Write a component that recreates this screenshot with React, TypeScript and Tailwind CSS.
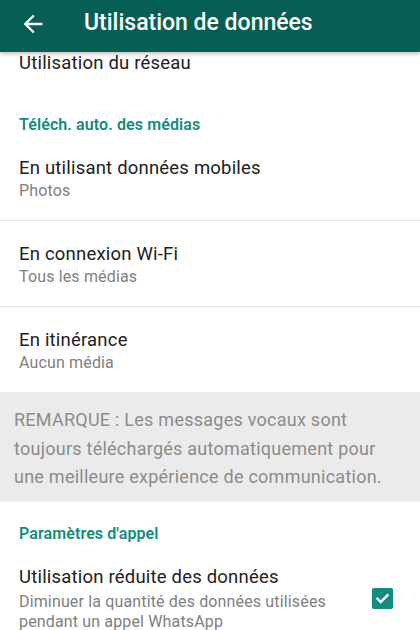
import type { ReactNode } from 'react';

function Row({ title, sub, children }: { title: string; sub: ReactNode; children?: ReactNode }) {
  return (
    <div className="flex items-center pl-[19px] pr-[27px] pt-[22px] pb-[19px]">
      <div className="flex-1">
        <div className="text-[18.5px] leading-[22px] tracking-[0.2px] text-[#212121]">{title}</div>
        <div className="mt-[2px] text-[16px] leading-[20px] tracking-[0.15px] text-[#808080]">{sub}</div>
      </div>
      {children}
    </div>
  );
}

function Section({ label }: { label: string }) {
  return (
    <div className="pl-[19px] text-[16px] leading-[20px] font-semibold tracking-[0.1px] text-[#128c7e]">{label}</div>
  );
}

export default function App() {
  return (
    <div className="w-[420px] h-[630px] overflow-hidden bg-white" style={{ fontFamily: 'Roboto, "Noto Sans", sans-serif' }}>
      <header className="relative z-10 h-[52px] bg-[#075e54] flex items-center shadow-[0_2px_4px_rgba(0,0,0,0.25)]">
        <svg viewBox="0 0 24 24" className="ml-[19px] -mt-[4px] w-[28px] h-[28px] fill-white">
          <path d="M20 11H7.83l5.59-5.59L12 4l-8 8 8 8 1.41-1.41L7.83 13H20v-2z" />
        </svg>
        <h1 className="ml-[37px] -mt-[6px] text-[23px] font-medium text-white">Utilisation de données</h1>
      </header>

      <div className="h-[48px] pl-[19px] text-[18.5px] leading-[22px] tracking-[0.2px] text-[#212121]">Utilisation du réseau</div>

      <div className="pt-[15px]">
        <Section label="Téléch. auto. des médias" />
      </div>

      <Row title="En utilisant données mobiles" sub="Photos" />
      <div className="h-px bg-[#e2e2e2]" />
      <Row title="En connexion Wi-Fi" sub="Tous les médias" />
      <div className="h-px bg-[#e2e2e2]" />
      <Row title="En itinérance" sub="Aucun média" />

      <div className="bg-[#ebebeb] px-[14px] pt-[14px] pb-[10px] text-[18px] leading-[28.5px] tracking-[0.25px] text-[#8c8c8c]">
        REMARQUE : Les messages vocaux sont
        <br />
        toujours téléchargés automatiquement pour
        <br />
        une meilleure expérience de communication.
      </div>

      <div className="pt-[22px]">
        <Section label="Paramètres d'appel" />
      </div>

      <div className="flex items-center pl-[19px] pr-[27px] pt-[22px]">
        <div className="flex-1">
          <div className="text-[18.5px] leading-[22px] tracking-[0.2px] text-[#212121]">Utilisation réduite des données</div>
          <div className="mt-[4px] text-[16px] leading-[20px] tracking-[0.15px] text-[#808080]">
            Diminuer la quantité des données utilisées
            <br />
            pendant un appel WhatsApp
          </div>
        </div>
        <div className="w-[21px] h-[21px] rounded-[2px] bg-[#128c7e] flex items-center justify-center">
          <svg viewBox="0 0 24 24" className="w-[17px] h-[17px]" fill="none" stroke="white" strokeWidth="3.5" strokeLinecap="square">
            <path d="M5 12.5l4.5 4.5L19 7.5" />
          </svg>
        </div>
      </div>
    </div>
  );
}
